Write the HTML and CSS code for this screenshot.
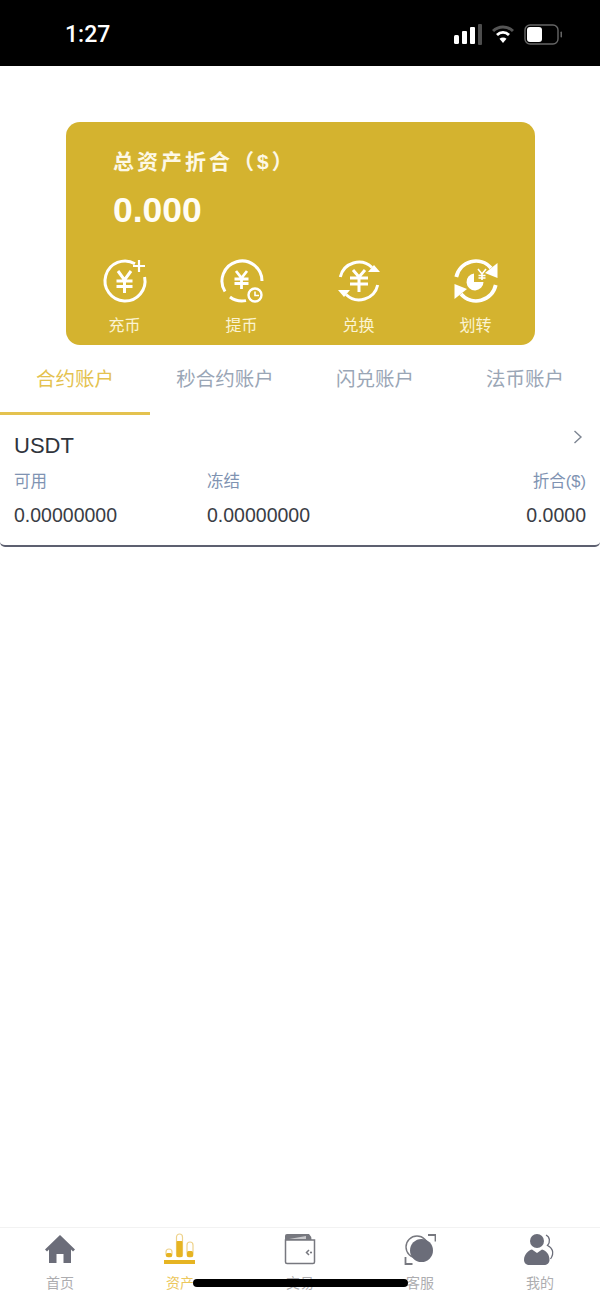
FILE: index.html
```html
<!DOCTYPE html>
<html lang="zh-CN">
<head>
    <meta charset="UTF-8">
    <meta name="viewport" content="width=device-width, initial-scale=1.0">
    <title>资产</title>
    <link rel="stylesheet" href="styles.css">
</head>
<body>

<div class="status-bar">
    <span class="clock">1:27</span>
    <div class="status-icons">
        <svg width="28" height="21" viewBox="0 0 28 21">
            <rect x="0" y="11" width="5" height="9" rx="1.500" fill="#fff"/>
            <rect x="8" y="7" width="5" height="13" rx="1" fill="#fff"/>
            <rect x="16" y="3" width="5" height="17" rx="1" fill="#fff"/>
            <rect x="24" y="0" width="4" height="21" rx="1" fill="#4d4d4d"/>
        </svg>
        <svg width="22" height="18" viewBox="0 0 22 18" fill="none">
            <path d="M1 6C6.500 .5 15.500 .5 21 6" stroke="#555" stroke-width="3"/>
            <path d="M5 10C8.500 6.500 13.500 6.500 17 10" stroke="#fff" stroke-width="2.800"/>
            <path d="M11 18L7.500 13.800C9.500 12.200 12.500 12.200 14.500 13.800Z" fill="#fff"/>
        </svg>
        <svg width="38" height="21" viewBox="0 0 38 21" fill="none">
            <rect x="1" y="1" width="33" height="19" rx="5" stroke="#666" stroke-width="1.400"/>
            <rect x="3" y="3" width="15" height="15" rx="3" fill="#fff"/>
            <rect x="36.500" y="7.500" width="1.500" height="6" rx=".7" fill="#666"/>
        </svg>
    </div>
</div>

<div class="page">
    <div class="asset-card">
        <p class="asset-label">总资产折合（$）</p>
        <p class="asset-total">0.000</p>
        <div class="actions">
            <div class="action">
                <svg width="44" height="44" viewBox="0 0 44 44" fill="none" stroke="#fff" stroke-width="3">
                    <path d="M32 4.700A20 20 0 1 0 41.600 18"/>
                    <path d="M36 1V13M30 7H42" stroke-width="2.200"/>
                    <path d="M15 12L21.500 21L28 12M13.500 22H29.500M13.500 27.500H29.500M21.500 21V34" stroke-width="3"/>
                </svg>
                <span>充币</span>
            </div>
            <div class="action">
                <svg width="44" height="44" viewBox="0 0 44 44" fill="none" stroke="#fff" stroke-width="3">
                    <path d="M5 32.500A20 20 0 1 1 42 22"/>
                    <path d="M10 38A20 20 0 0 0 26 41.600"/>
                    <path d="M16 12L21.500 19L27 12M14.500 20H28.500M14.500 24.500H28.500M21.500 19V30" stroke-width="2.800"/>
                    <circle cx="35" cy="36" r="6.500" stroke-width="2.400" fill="#d4b32f"/>
                    <path d="M35 32.500V36.500H39" stroke-width="1.600"/>
                </svg>
                <span>提币</span>
            </div>
            <div class="action">
                <svg width="44" height="44" viewBox="0 0 44 44" fill="none" stroke="#fff" stroke-width="3">
                    <path d="M3.300 18A19 19 0 0 1 35 8.500"/>
                    <path d="M40.700 26A19 19 0 0 1 9 35.500"/>
                    <path d="M31 13H43L37 6Z" fill="#fff" stroke="none"/>
                    <path d="M13 31H1L7 38Z" fill="#fff" stroke="none"/>
                    <path d="M16 11L22 18L28 11M13 19H31M13 25H31M22 18V33" stroke-width="3"/>
                </svg>
                <span>兑换</span>
            </div>
            <div class="action">
                <svg width="44" height="44" viewBox="0 0 44 44" fill="none" stroke="#fff" stroke-width="3.800">
                    <path d="M2.300 18A20 20 0 0 1 37 9"/>
                    <path d="M41.700 26A20 20 0 0 1 7 35"/>
                    <path d="M43.500 4V19L31 14Z" fill="#fff" stroke="none"/>
                    <path d="M.5 25V40L13 30Z" fill="#fff" stroke="none"/>
                    <path d="M20 14.500A8.500 8.500 0 1 0 29.500 23H20Z" fill="#fff" stroke="none"/>
                    <path d="M24 10L28 15L32 10M28 15V21M24.500 16.500H31.500M24.500 19H31.500" stroke-width="1.600"/>
                </svg>
                <span>划转</span>
            </div>
        </div>
    </div>

    <div class="tabs">
        <div class="tab tab-active">合约账户</div>
        <div class="tab">秒合约账户</div>
        <div class="tab">闪兑账户</div>
        <div class="tab">法币账户</div>
    </div>

    <div class="account">
        <div class="account-head">
            <span class="coin">USDT</span>
            <svg class="chevron" width="10" height="14" viewBox="0 0 10 14" fill="none">
                <path d="M1.500 1L8 7L1.500 13" stroke="#7d8592" stroke-width="1.400"/>
            </svg>
        </div>
        <div class="account-row labels">
            <span>可用</span>
            <span>冻结</span>
            <span>折合($)</span>
        </div>
        <div class="account-row values">
            <span>0.00000000</span>
            <span>0.00000000</span>
            <span>0.0000</span>
        </div>
    </div>
</div>

<div class="tabbar">
    <div class="tabbar-item">
        <svg width="32" height="32" viewBox="0 0 32 32">
            <path d="M16 2L31 16.500L29 18.500L27 16.500V30H19.500V21H12.500V30H5V16.500L3 18.500L1 16.500Z" fill="#6b6d79"/>
        </svg>
        <span>首页</span>
    </div>
    <div class="tabbar-item tabbar-active">
        <svg width="32" height="32" viewBox="0 0 32 32" fill="none">
            <rect x="2" y="16" width="6" height="8" rx="3" stroke="#eed28a" stroke-width="1.200"/>
            <rect x="2" y="20" width="6" height="4" rx="1.500" fill="#e6b422"/>
            <rect x="12.500" y="1" width="6" height="23" rx="3" stroke="#eed28a" stroke-width="1.200"/>
            <rect x="12.500" y="8" width="6" height="16" rx="1" fill="#e6b422"/>
            <rect x="23" y="9" width="6" height="15" rx="3" stroke="#eed28a" stroke-width="1.200"/>
            <rect x="23" y="18" width="6" height="6" rx="1.500" fill="#e6b422"/>
            <rect x="0" y="27" width="31" height="4" fill="#e6b422"/>
        </svg>
        <span>资产</span>
    </div>
    <div class="tabbar-item">
        <svg width="32" height="32" viewBox="0 0 32 32" fill="none">
            <path d="M1.500 7V29A1.500 1.500 0 0 0 3 30.500H29A1.500 1.500 0 0 0 30.500 29V7H1.500Z" stroke="#77787f" stroke-width="1.500"/>
            <path d="M1 7V3A2 2 0 0 1 3 1H25Q27.500 3 27.500 7Z" fill="#77787f"/>
            <path d="M5 6L22 3V6Z" fill="#c9c9cc"/>
            <path d="M25 17L22.500 19.500L25 22" stroke="#77787f" stroke-width="1.500"/>
            <circle cx="27" cy="19.500" r="1.100" fill="#77787f"/>
        </svg>
        <span>交易</span>
    </div>
    <div class="tabbar-item">
        <svg width="32" height="32" viewBox="0 0 32 32" fill="none">
            <circle cx="13" cy="14" r="11" stroke="#77787f" stroke-width="1.400"/>
            <circle cx="17.500" cy="17.500" r="11.500" fill="#6b6d79"/>
            <path d="M24 2H31.500V8.500M1.500 24V31H8.500" stroke="#77787f" stroke-width="1.800"/>
        </svg>
        <span>客服</span>
    </div>
    <div class="tabbar-item">
        <svg width="32" height="32" viewBox="0 0 32 32" fill="none">
            <circle cx="13" cy="8" r="7" fill="#6b6d79"/>
            <path d="M0 27C0 21 5 17 8 16.500L13 20L18 16.500C22 17.500 25.500 21 25.500 27C25.500 30 23 32 20 32H5.500C2.500 32 0 30 0 27Z" fill="#6b6d79"/>
            <path d="M22 2C26 4 26.500 9 23.500 12.500C28 14.500 31 19.500 26.500 26" stroke="#6b6d79" stroke-width="1.300"/>
        </svg>
        <span>我的</span>
    </div>
    <div class="home-bar"></div>
</div>

</body>
</html>
```

FILE: styles.css
```css
* {
    box-sizing: border-box;
}

html, body {
    height: 100%;
}

body {
    margin: 0;
    display: flex;
    flex-direction: column;
    font-family: "Liberation Sans", "Noto Sans CJK SC", sans-serif;
    background: #fff;
    overflow: hidden;
}

p {
    margin: 0;
}

/* Black strip at the top */
.status-bar {
    height: 66px;
    flex: none;
    background: #000;
    color: #fff;
    display: flex;
    justify-content: space-between;
    align-items: center;
    padding: 2px 38px 0 65px;
}

.clock {
    font-family: Roboto, "Liberation Sans", sans-serif;
    font-size: 23px;
    font-weight: 500;
}

.status-icons {
    display: flex;
    align-items: center;
    gap: 10px;
}

.page {
    flex: 1;
}

/* Gold balance card */
.asset-card {
    width: 469px;
    height: 223px;
    margin: 56px 0 0 66px;
    padding: 26px 0 0;
    background: #d4b32f;
    border-radius: 14px;
    color: #fff;
}

.asset-label {
    margin-left: 47px;
    font-size: 21px;
    font-weight: 700;
    line-height: 28px;
    letter-spacing: 3px;
    color: #fdf8e6;
}

.asset-total {
    margin: 13px 0 0 47px;
    font-size: 35.500px;
    font-weight: 700;
    line-height: 42px;
    color: #fffdf5;
}

.actions {
    display: grid;
    grid-template-columns: repeat(4, 117px);
    margin: 28px 0 0 0;
}

.action {
    display: flex;
    flex-direction: column;
    align-items: center;
    gap: 12px;
    font-size: 16px;
    line-height: 22px;
    color: #fbf3d2;
}

.action svg {
    display: block;
    overflow: visible;
}

/* Account type tabs */
.tabs {
    display: grid;
    grid-template-columns: repeat(4, 150px);
    height: 70px;
}

.tab {
    padding-top: 20px;
    text-align: center;
    font-size: 19.500px;
    line-height: 28px;
    color: #9aa6b6;
}

.tab-active {
    color: #e4c24f;
    border-bottom: 3px solid #e4c24f;
}

/* Account row */
.account {
    height: 132px;
    padding: 0 14px;
    border-bottom: 2px solid #5d6070;
    border-radius: 0 0 5px 5px;
}

.account-head {
    display: flex;
    justify-content: space-between;
    align-items: flex-start;
    height: 54px;
}

.coin {
    margin-top: 17px;
    font-size: 22px;
    line-height: 28px;
    color: #30343c;
}

.chevron {
    margin: 15px 3px 0 0;
}

.account-row {
    display: grid;
    grid-template-columns: 193px 1fr auto;
}

.labels {
    font-size: 16.500px;
    line-height: 24px;
    color: #7f93b2;
}

.values {
    margin-top: 9px;
    font-size: 19.500px;
    line-height: 26px;
    color: #3a3d45;
}

/* Bottom navigation */
.tabbar {
    position: relative;
    flex: none;
    height: 72px;
    display: grid;
    grid-template-columns: repeat(5, 120px);
    border-top: 1px solid #f2f2f2;
    padding-top: 5px;
}

.tabbar-item {
    display: flex;
    flex-direction: column;
    align-items: center;
    gap: 8px;
    font-size: 14px;
    line-height: 20px;
    color: #adadb0;
}

.tabbar-active {
    color: #ecc75c;
}

.home-bar {
    position: absolute;
    left: 193px;
    bottom: 12px;
    width: 215px;
    height: 8px;
    border-radius: 4px;
    background: #000;
}
```
